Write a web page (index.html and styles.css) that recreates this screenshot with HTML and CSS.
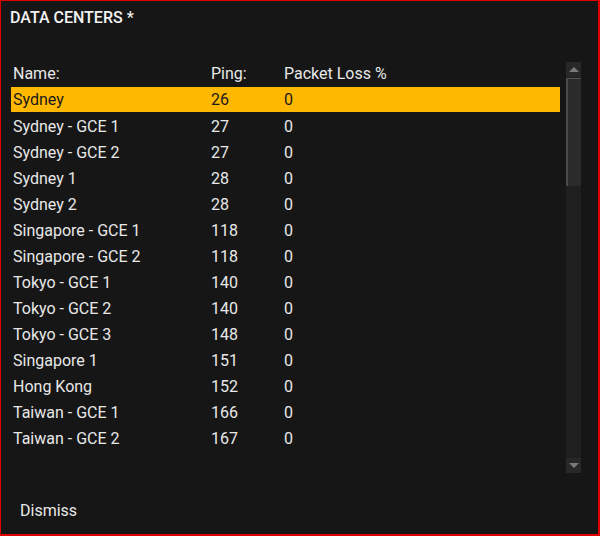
FILE: index.html
```html
<!DOCTYPE html>
<html lang="en">

<head>
    <meta charset="UTF-8">
    <meta name="viewport" content="width=device-width, initial-scale=1.0">
    <title>Data Centers</title>
    <link rel="stylesheet" href="styles.css">
</head>

<body>
    <div class="panel">
        <h2 class="title">DATA CENTERS *</h2>
        <div class="listWrap">
            <div class="list">
                <div class="row header">
                    <span class="col-name">Name:</span>
                    <span class="col-ping">Ping:</span>
                    <span class="col-loss">Packet Loss %</span>
                </div>
                <div class="row selected">
                    <span class="col-name">Sydney</span>
                    <span class="col-ping">26</span>
                    <span class="col-loss">0</span>
                </div>
                <div class="row"><span class="col-name">Sydney - GCE 1</span><span class="col-ping">27</span><span class="col-loss">0</span></div>
                <div class="row"><span class="col-name">Sydney - GCE 2</span><span class="col-ping">27</span><span class="col-loss">0</span></div>
                <div class="row"><span class="col-name">Sydney 1</span><span class="col-ping">28</span><span class="col-loss">0</span></div>
                <div class="row"><span class="col-name">Sydney 2</span><span class="col-ping">28</span><span class="col-loss">0</span></div>
                <div class="row"><span class="col-name">Singapore - GCE 1</span><span class="col-ping">118</span><span class="col-loss">0</span></div>
                <div class="row"><span class="col-name">Singapore - GCE 2</span><span class="col-ping">118</span><span class="col-loss">0</span></div>
                <div class="row"><span class="col-name">Tokyo - GCE 1</span><span class="col-ping">140</span><span class="col-loss">0</span></div>
                <div class="row"><span class="col-name">Tokyo - GCE 2</span><span class="col-ping">140</span><span class="col-loss">0</span></div>
                <div class="row"><span class="col-name">Tokyo - GCE 3</span><span class="col-ping">148</span><span class="col-loss">0</span></div>
                <div class="row"><span class="col-name">Singapore 1</span><span class="col-ping">151</span><span class="col-loss">0</span></div>
                <div class="row"><span class="col-name">Hong Kong</span><span class="col-ping">152</span><span class="col-loss">0</span></div>
                <div class="row"><span class="col-name">Taiwan - GCE 1</span><span class="col-ping">166</span><span class="col-loss">0</span></div>
                <div class="row"><span class="col-name">Taiwan - GCE 2</span><span class="col-ping">167</span><span class="col-loss">0</span></div>
            </div>
            <div class="scrollbar">
                <div class="scroll-btn"><span class="arrow-up"></span></div>
                <div class="track">
                    <div class="thumb"></div>
                </div>
                <div class="scroll-btn"><span class="arrow-down"></span></div>
            </div>
        </div>
        <div class="footer">
            <button class="dismissBtn">Dismiss</button>
        </div>
    </div>
</body>

</html>
```

FILE: styles.css
```css
html,
body {
    margin: 0;
    padding: 0;
    background-color: #161616;
}

body {
    font-family: Roboto, "Liberation Sans", sans-serif;
    color: #e8e8e8;
}

.panel {
    box-sizing: border-box;
    width: 600px;
    height: 536px;
    border-style: solid;
    border-color: #e00000;
    border-width: 1px 2px 2px 1px;
    background-color: #161616;
    padding: 8px 17px 0 9px;
    display: flex;
    flex-direction: column;
}

.title {
    margin: 0;
    font-size: 16px;
    font-weight: 500;
    color: #f2f2f2;
    line-height: 18px;
}

.listWrap {
    display: flex;
    margin-top: 35px;
    height: 411px;
}

.list {
    flex: 1;
    padding-right: 6px;
}

.row {
    display: flex;
    height: 26px;
    align-items: center;
    font-size: 16px;
    padding-left: 3px;
    box-sizing: border-box;
}

.row.header {
    height: 25px;
    padding-bottom: 2px;
}

.row.selected {
    background-color: #ffb800;
    color: #1a1a1a;
    height: 25px;
    margin-bottom: 1px;
    margin-left: 1px;
    padding-left: 2px;
}

.col-name {
    width: 198px;
}

.col-ping {
    width: 73px;
}

.scrollbar {
    width: 15px;
    display: flex;
    flex-direction: column;
    background-color: #1e1e1e;
}

.scroll-btn {
    height: 15px;
    background-color: #282828;
    display: flex;
    align-items: center;
    justify-content: center;
}

.arrow-up {
    width: 0;
    height: 0;
    border-left: 5px solid transparent;
    border-right: 5px solid transparent;
    border-bottom: 5px solid #7a7a7a;
}

.arrow-down {
    width: 0;
    height: 0;
    border-left: 5px solid transparent;
    border-right: 5px solid transparent;
    border-top: 5px solid #7a7a7a;
}

.track {
    flex: 1;
    background-color: #1f1f1f;
    padding-top: 1px;
}

.thumb {
    height: 108px;
    background-color: #2b2b2b;
    border-top: 1px solid #555;
    border-left: 2px solid #4a4a4a;
    box-sizing: border-box;
}

.footer {
    padding-top: 28px;
}

.dismissBtn {
    background: none;
    border: none;
    padding: 0 0 0 10px;
    font-family: Roboto, "Liberation Sans", sans-serif;
    font-size: 16px;
    color: #e8e8e8;
    cursor: pointer;
}
```
